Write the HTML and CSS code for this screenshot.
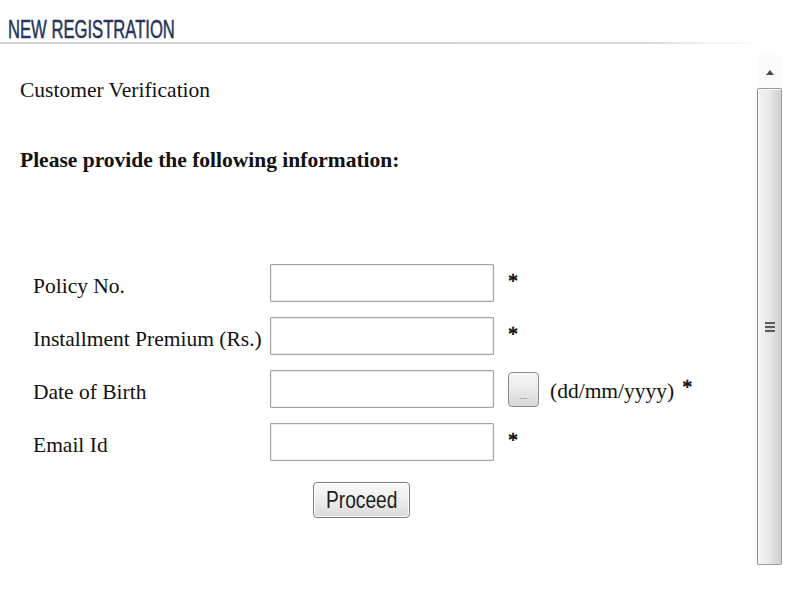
FILE: index.html
```html
<!DOCTYPE html>
<html>
<head>
<meta charset="utf-8">
<title>New Registration</title>
<link rel="stylesheet" href="styles.css">
</head>
<body>
<div class="header"><span class="title">NEW REGISTRATION</span></div>
<div class="main">
  <div class="content">
    <div class="subtitle">Customer Verification</div>
    <div class="heading">Please provide the following information:</div>
    <div class="form">
      <div class="row">
        <label class="label">Policy No.</label>
        <input class="field" type="text">
        <span class="extra"><span class="req">*</span></span>
      </div>
      <div class="row">
        <label class="label">Installment Premium (Rs.)</label>
        <input class="field" type="text">
        <span class="extra"><span class="req">*</span></span>
      </div>
      <div class="row">
        <label class="label">Date of Birth</label>
        <input class="field" type="text">
        <span class="extra"><button class="pick" type="button">...</button><span class="hint">(dd/mm/yyyy)</span><span class="req">*</span></span>
      </div>
      <div class="row">
        <label class="label">Email Id</label>
        <input class="field" type="text">
        <span class="extra"><span class="req">*</span></span>
      </div>
      <div class="actions">
        <button class="proceed" type="button"><span class="proceed-text">Proceed</span></button>
      </div>
    </div>
  </div>
  <div class="scrollbar">
    <div class="sb-up"><span class="sb-arrow"></span></div>
    <div class="sb-thumb"><span class="sb-grip"></span></div>
  </div>
</div>
</body>
</html>
```

FILE: styles.css
```css
html, body {
  margin: 0;
  padding: 0;
  background: #ffffff;
}

body {
  font-family: "Liberation Serif", "Times New Roman", serif;
  font-size: 21.5px;
  color: #111111;
  width: 800px;
  height: 600px;
  overflow: hidden;
}

.header {
  padding: 16px 0 0 8px;
  height: 26px;
  line-height: 26px;
  border-bottom: 2px solid transparent;
  border-image: linear-gradient(to right, #d6d6d6 0%, #d9d9d9 86%, #eeeeee 92%, #f6f6f6 98%, #ffffff 100%) 1;
  margin-right: 46px;
}

.title {
  display: inline-block;
  font-family: "Liberation Sans", Arial, sans-serif;
  font-size: 25px;
  color: #26355a;
  -webkit-text-stroke: 0.5px #26355a;
  transform: scaleX(0.665);
  transform-origin: left center;
  white-space: nowrap;
}

.main {
  display: flex;
}

.content {
  flex: 1;
  padding-left: 20px;
}

.subtitle {
  margin-top: 34px;
  line-height: 25px;
}

.heading {
  margin-top: 45px;
  line-height: 25px;
  font-weight: bold;
}

.form {
  margin-top: 91px;
  margin-left: 13px;
  width: 657px;
  display: flex;
  flex-direction: column;
  gap: 15px;
}

.row {
  display: grid;
  grid-template-columns: 237px 224px 1fr;
  align-items: center;
  height: 38px;
}

.label {
  line-height: 25px;
  padding-top: 7px;
  white-space: nowrap;
}

.field {
  box-sizing: border-box;
  width: 224px;
  height: 38px;
  margin: 0;
  border: 1px solid #a4a4a4;
  border-radius: 1px;
  box-shadow: inset 0 0 0 1px #ececec;
  background: #ffffff;
  padding: 0 4px;
}

.extra {
  display: flex;
  align-items: center;
  padding-left: 14px;
  line-height: 25px;
}

.req {
  font-size: 20px;
  color: #111111;
  -webkit-text-stroke: 0.6px #111111;
}

.pick {
  box-sizing: border-box;
  width: 31px;
  height: 35px;
  margin: 0 11px 0 0;
  padding: 14px 0 0 0;
  border: 1px solid #8c8c8c;
  border-radius: 4px;
  background: linear-gradient(#f7f7f7, #e9e9e9 50%, #d8d8d8);
  font-family: "Liberation Sans", Arial, sans-serif;
  font-size: 9px;
  color: #666666;
  line-height: 10px;
}

.hint {
  margin-right: 8px;
  padding-top: 4px;
}

.row .extra .req {
  margin-top: -4px;
}

.actions {
  display: flex;
  justify-content: center;
  padding-top: 6px;
}

.proceed {
  box-sizing: border-box;
  width: 97px;
  height: 36px;
  margin: 0;
  padding: 0;
  border: 1px solid #7d7d7d;
  border-radius: 4px;
  background: linear-gradient(#fafafa, #ededed 50%, #dadada);
  box-shadow: inset 0 0 0 1px #fdfdfd;
  display: flex;
  align-items: center;
  justify-content: center;
}

.proceed-text {
  display: inline-block;
  font-family: "Liberation Sans", Arial, sans-serif;
  font-size: 24px;
  color: #1e1e1e;
  transform: scaleX(0.8);
}

.scrollbar {
  width: 25px;
  margin: 11px 18px 0 0;
  display: flex;
  flex-direction: column;
}

.sb-up {
  height: 33px;
  background: #fbfbfb;
  display: flex;
  align-items: center;
  justify-content: center;
}

.sb-arrow {
  width: 0;
  height: 0;
  border-left: 4px solid transparent;
  border-right: 4px solid transparent;
  border-bottom: 5px solid #4a4a4a;
  margin-top: 1px;
}

.sb-thumb {
  box-sizing: border-box;
  height: 477px;
  border: 1px solid #9a9a9a;
  border-left-color: #8a8a8a;
  border-radius: 2px;
  background: linear-gradient(to right, #f4f4f4, #ececec 40%, #d8d8d8 80%, #cfcfcf);
  box-shadow: inset 1px 1px 0 #ffffff;
  display: flex;
  justify-content: center;
  padding-top: 233px;
}

.sb-grip {
  width: 10px;
  height: 11px;
  background: repeating-linear-gradient(#5c5c5c 0 2px, #dcdcdc 2px 4px);
}
```
